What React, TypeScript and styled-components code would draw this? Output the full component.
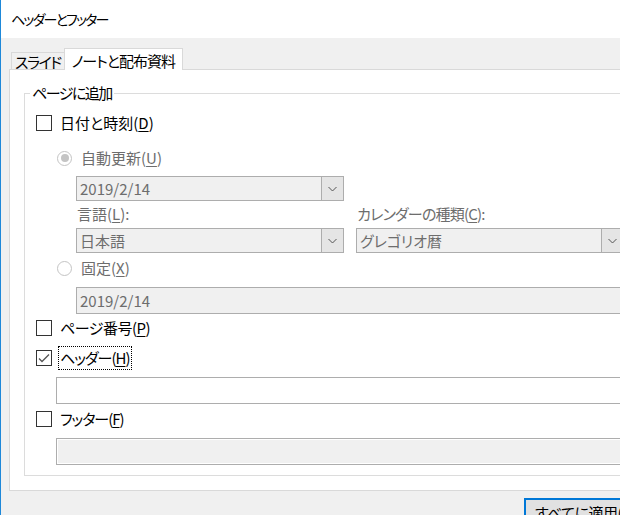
import styled, { createGlobalStyle } from "styled-components";

const GlobalStyle = createGlobalStyle`
  html, body {
    margin: 0;
    padding: 0;
    width: 620px;
    height: 515px;
    overflow: hidden;
    background: #f0f0f0;
  }
  body {
    font-family: "Noto Sans CJK JP", "Noto Sans", sans-serif;
    font-size: 15px;
    color: #000;
    font-feature-settings: "palt";
  }
  u {
    text-underline-offset: 2px;
  }
`;

const GRAY = "#6d6d6d";

const Window = styled.div`
  width: 660px;
  height: 515px;
  border-left: 1px solid #1e88d9;
  display: flex;
  flex-direction: column;
  background: #f0f0f0;
`;

const TitleBar = styled.div`
  height: 38px;
  flex: none;
  background: #fff;
  display: flex;
  align-items: center;
  padding-left: 10px;
  font-size: 14px;
  letter-spacing: -1.8px;
  line-height: 20px;
`;

const Client = styled.div`
  flex: 1;
  padding: 10px 8px 0 8px;
  display: flex;
  flex-direction: column;
`;

const TabStrip = styled.div`
  display: flex;
  align-items: flex-end;
  height: 22px;
  margin: 0 0 -1px 2px;
  position: relative;
  z-index: 1;
`;

const Tab = styled.div<{ $active?: boolean }>`
  box-sizing: border-box;
  border: 1px solid #d9d9d9;
  border-bottom: none;
  white-space: nowrap;
  ${(p) =>
    p.$active
      ? `
    height: 22px;
    background: #fff;
    padding: 2px 7px 0 7px;
    line-height: 19px;
    letter-spacing: -1px;
  `
      : `
    height: 17px;
    margin-bottom: 1px;
    border-right: none;
    background: #f0f0f0;
    padding: 0 3px;
    line-height: 17px;
    letter-spacing: -1.5px;
  `}
`;

const Panel = styled.div`
  background: #fff;
  border: 1px solid #d9d9d9;
  padding: 13px 14px 14px 14px;
`;

const Group = styled.fieldset`
  margin: 0;
  padding: 0;
  min-width: 0;
  border: 1px solid #dcdcdc;
`;

const Legend = styled.legend`
  margin-left: 5px;
  padding: 0 2px;
  line-height: 20px;
  letter-spacing: -1.5px;
`;

const GroupBody = styled.div`
  display: flex;
  flex-direction: column;
  padding: 0 13px 10px 11px;
`;

const Row = styled.div<{ $top: number; $indent?: number }>`
  display: flex;
  align-items: center;
  height: 24px;
  margin-top: ${(p) => p.$top}px;
  margin-left: ${(p) => p.$indent ?? 0}px;
`;

const Box = styled.div`
  box-sizing: border-box;
  width: 16px;
  height: 16px;
  flex: none;
  border: 1px solid #333;
  background: #fff;
  display: flex;
`;

const CheckLabel = styled.span<{ $focus?: boolean; $tracking?: number }>`
  margin-left: 6px;
  padding: 0 1px;
  line-height: 22px;
  border: 1px ${(p) => (p.$focus ? "dotted #000" : "solid transparent")};
  letter-spacing: ${(p) => p.$tracking ?? 0}px;
  white-space: nowrap;
`;

const RadioCircle = styled.div<{ $checked?: boolean }>`
  box-sizing: border-box;
  width: 15px;
  height: 15px;
  flex: none;
  border-radius: 50%;
  border: 1px solid #c4c4c4;
  background: #fff;
  display: flex;
  align-items: center;
  justify-content: center;
  &::after {
    content: "";
    display: ${(p) => (p.$checked ? "block" : "none")};
    width: 8px;
    height: 8px;
    border-radius: 50%;
    background: #c4c4c4;
  }
`;

const RadioLabel = styled.span`
  margin-left: 9px;
  color: ${GRAY};
  line-height: 22px;
  white-space: nowrap;
`;

const Indented = styled.div<{ $top: number }>`
  margin-left: 40px;
  margin-top: ${(p) => p.$top}px;
`;

const Combo = styled.div<{ $width?: number }>`
  box-sizing: border-box;
  display: flex;
  height: 25px;
  width: ${(p) => (p.$width ? `${p.$width}px` : "auto")};
  border: 1px solid #adadad;
  background: #f0f0f0;
  color: ${GRAY};
`;

const ComboText = styled.div`
  flex: 1;
  padding-left: 3px;
  line-height: 23px;
  white-space: nowrap;
`;

const ComboButton = styled.div`
  width: 21px;
  flex: none;
  border-left: 1px solid #adadad;
  background: #e5e5e5;
  display: flex;
  align-items: center;
  justify-content: center;
`;

const LangGrid = styled.div`
  display: grid;
  grid-template-columns: 268px 1fr;
  grid-template-rows: 20px 25px;
  column-gap: 12px;
  row-gap: 4px;
  margin-top: 3px;
`;

const FieldLabel = styled.div<{ $tracking?: number }>`
  color: ${GRAY};
  line-height: 20px;
  padding-left: 1px;
  letter-spacing: ${(p) => p.$tracking ?? 0}px;
  white-space: nowrap;
`;

const TextBox = styled.div<{ $disabled?: boolean; $indent: number; $top: number }>`
  box-sizing: border-box;
  height: 27px;
  margin-left: ${(p) => p.$indent}px;
  margin-top: ${(p) => p.$top}px;
  border: 1px solid #adadad;
  background: ${(p) => (p.$disabled ? "#f0f0f0" : "#fff")};
  color: ${GRAY};
  padding-left: 3px;
  line-height: 25px;
`;

const FooterBox = styled(TextBox)`
  box-shadow: inset 0 0 0 1px #fff;
`;

const ButtonRow = styled.div`
  display: flex;
  margin-top: 7px;
  padding-left: 515px;
`;

const Button = styled.button`
  box-sizing: border-box;
  height: 30px;
  padding: 0 9px;
  border: 2px solid #0078d7;
  background: #e1e1e1;
  font: inherit;
  color: #000;
  white-space: nowrap;
  line-height: 24px;
  letter-spacing: -0.5px;
`;

const Chevron = () => (
  <svg width="9" height="6" viewBox="0 0 9 6">
    <polyline points="0.5,1 4.5,5 8.5,1" fill="none" stroke="#555" strokeWidth="1" />
  </svg>
);

const Check = () => (
  <svg width="14" height="14" viewBox="0 0 14 14">
    <polyline points="2,7.5 5,10.5 12,3.5" fill="none" stroke="#555" strokeWidth="1.3" />
  </svg>
);

export default function App() {
  return (
    <>
      <GlobalStyle />
      <Window>
        <TitleBar>ヘッダーとフッター</TitleBar>
        <Client>
          <TabStrip>
            <Tab>スライド</Tab>
            <Tab $active>ノートと配布資料</Tab>
          </TabStrip>
          <Panel>
            <Group>
              <Legend>ページに追加</Legend>
              <GroupBody>
                <Row $top={8}>
                  <Box />
                  <CheckLabel>
                    日付と時刻(<u>D</u>)
                  </CheckLabel>
                </Row>
                <Row $top={11} $indent={21}>
                  <RadioCircle $checked />
                  <RadioLabel>
                    自動更新(<u>U</u>)
                  </RadioLabel>
                </Row>
                <Indented $top={6}>
                  <Combo $width={268}>
                    <ComboText>2019/2/14</ComboText>
                    <ComboButton>
                      <Chevron />
                    </ComboButton>
                  </Combo>
                  <LangGrid>
                    <FieldLabel>
                      言語(<u>L</u>):
                    </FieldLabel>
                    <FieldLabel $tracking={-0.8}>
                      カレンダーの種類(<u>C</u>):
                    </FieldLabel>
                    <Combo>
                      <ComboText>日本語</ComboText>
                      <ComboButton>
                        <Chevron />
                      </ComboButton>
                    </Combo>
                    <Combo>
                      <ComboText>グレゴリオ暦</ComboText>
                      <ComboButton>
                        <Chevron />
                      </ComboButton>
                    </Combo>
                  </LangGrid>
                </Indented>
                <Row $top={3} $indent={21}>
                  <RadioCircle />
                  <RadioLabel>
                    固定(<u>X</u>)
                  </RadioLabel>
                </Row>
                <TextBox $disabled $indent={40} $top={7}>
                  2019/2/14
                </TextBox>
                <Row $top={2}>
                  <Box />
                  <CheckLabel $tracking={-0.5}>
                    ページ番号(<u>P</u>)
                  </CheckLabel>
                </Row>
                <Row $top={6}>
                  <Box>
                    <Check />
                  </Box>
                  <CheckLabel $focus $tracking={-1}>
                    ヘッダー(<u>H</u>)
                  </CheckLabel>
                </Row>
                <TextBox $indent={20} $top={7} />
                <Row $top={3}>
                  <Box />
                  <CheckLabel $tracking={-1}>
                    フッター(<u>F</u>)
                  </CheckLabel>
                </Row>
                <FooterBox $disabled $indent={20} $top={7} />
              </GroupBody>
            </Group>
          </Panel>
          <ButtonRow>
            <Button>すべてに適用(Y)</Button>
          </ButtonRow>
        </Client>
      </Window>
    </>
  );
}
